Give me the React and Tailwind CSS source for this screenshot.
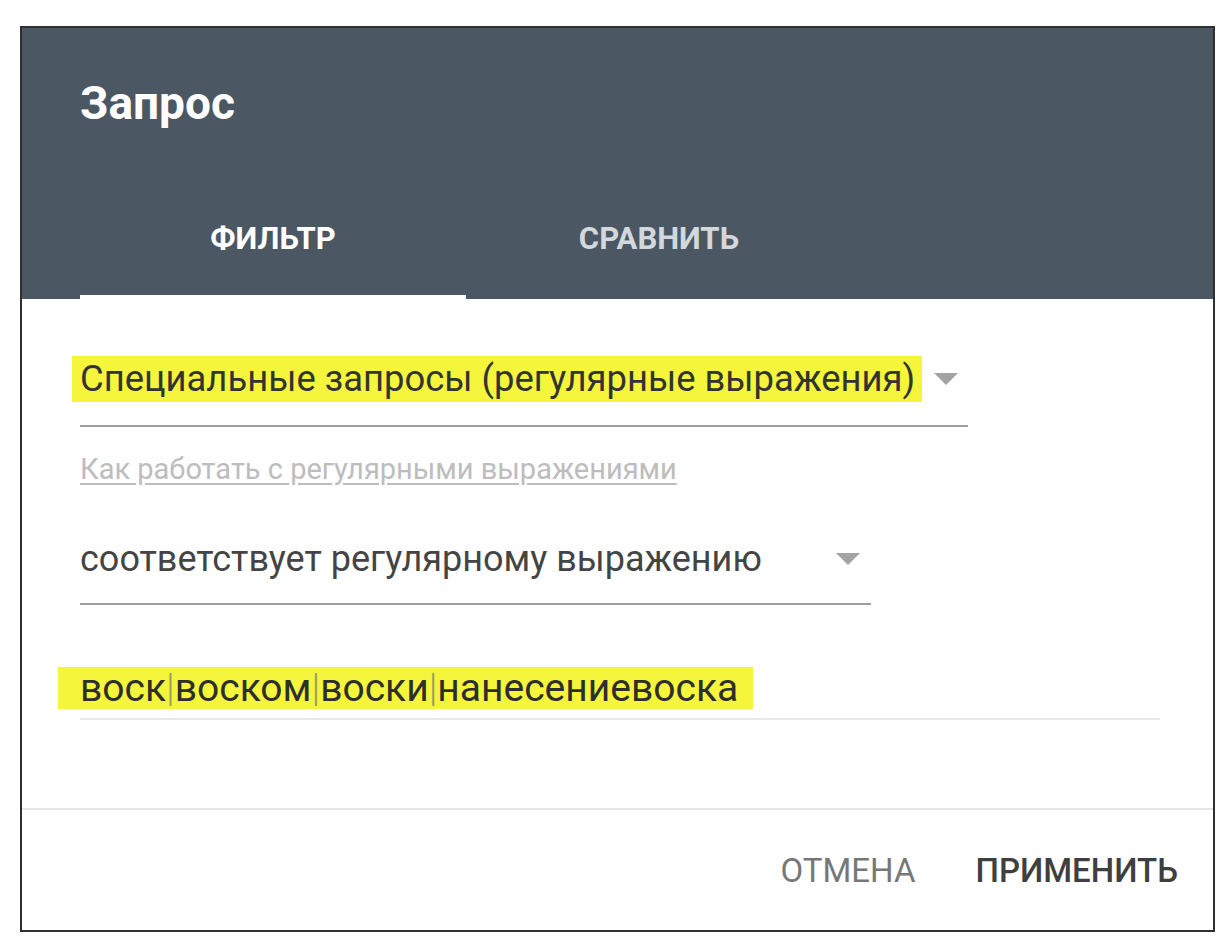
import React from "react";

const font = { fontFamily: "Roboto, 'Noto Sans', sans-serif" };

function Arrow({ className }) {
  return (
    <svg width="24" height="12" viewBox="0 0 24 12" className={className}>
      <polygon points="0,0 24,0 12,12" fill="#a3a3a3" />
    </svg>
  );
}

export default function App() {
  const parts = ["воск", "воском", "воски", "нанесениевоска"];

  return (
    <div className="w-[1232px] h-[944px] bg-white pt-[26px] pl-[20px]" style={font}>
      <div className="w-[1195px] h-[906px] border-2 border-[#2f2f2f] flex flex-col bg-white">
        {/* header */}
        <div className="bg-[#4b5762] flex flex-col pl-[58px]">
          <h1 className="mt-[52px] text-[46px] leading-none font-bold text-white">Запрос</h1>
          <div className="flex mt-[97px]">
            <div className="w-[386px] flex flex-col items-center">
              <span className="text-[31px] leading-none font-bold text-white">ФИЛЬТР</span>
              <div className="mt-[41px] h-[4px] w-full bg-white" />
            </div>
            <div className="w-[386px] flex flex-col items-center">
              <span className="text-[31px] leading-none font-bold text-[#d3d8dc]">СРАВНИТЬ</span>
              <div className="mt-[41px] h-[4px] w-full" />
            </div>
          </div>
        </div>

        {/* content */}
        <div className="flex-1 flex flex-col pl-[58px] border-b-2 border-[#e6e6e6]">
          <div className="mt-[57px] w-[888px] pb-[23px] border-b-2 border-[#9e9e9e] flex items-center">
            <span className="-ml-[8px] pl-[8px] pr-[7px] bg-[#f5f53c] text-[36.4px] leading-[46px] text-[#333]">
              Специальные запросы (регулярные выражения)
            </span>
            <Arrow className="ml-[12px]" />
          </div>

          <a className="mt-[28px] self-start text-[29px] leading-none text-[#bdbdbd] underline underline-offset-[4px]">
            Как работать с регулярными выражениями
          </a>

          <div className="mt-[52px] w-[791px] pb-[21px] border-b-2 border-[#9e9e9e] flex items-center">
            <span className="text-[36px] leading-[46px] text-[#444]">соответствует регулярному выражению</span>
            <Arrow className="ml-auto mr-[11px]" />
          </div>

          <div className="mt-[62px] w-[1080px] pb-[9px] border-b-2 border-[#e8e8e8]">
            <span className="-ml-[22px] pl-[22px] pr-[15px] inline-block bg-[#f5f53c] text-[39px] leading-[42px] text-[#2e2e2e]">
              {parts.map((p, i) => (
                <React.Fragment key={p}>
                  {i > 0 && <span className="text-[#9a9a6a] font-light">|</span>}
                  {p}
                </React.Fragment>
              ))}
            </span>
          </div>
        </div>

        {/* footer */}
        <div className="h-[120px] flex items-center justify-end pr-[35px] gap-[60px]">
          <button className="text-[33px] leading-none text-[#777]">ОТМЕНА</button>
          <button className="text-[33px] leading-none font-medium text-[#3f3f3f]">ПРИМЕНИТЬ</button>
        </div>
      </div>
    </div>
  );
}
